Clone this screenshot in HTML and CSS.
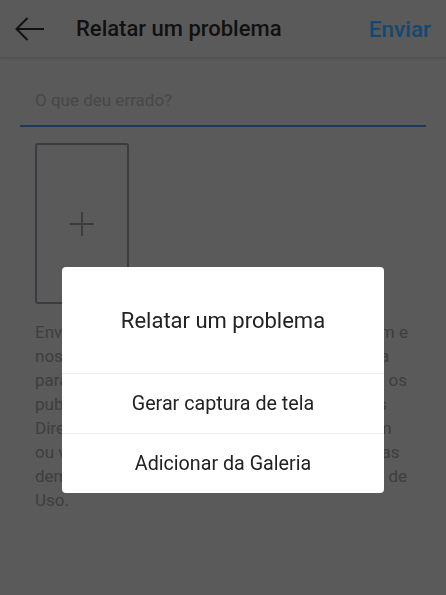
FILE: index.html
```html
<!DOCTYPE html>
<html lang="pt-BR">
<head>
    <meta charset="UTF-8">
    <meta name="viewport" content="width=device-width, initial-scale=1.0">
    <title>Relatar um problema</title>
    <link rel="stylesheet" href="styles.css">
</head>
<body>
    <header class="topbar">
        <svg class="back" width="30" height="24" viewBox="0 0 30 24">
            <path d="M29 12H1.5M12.5 1L1.5 12l11 11" fill="none" stroke="#111" stroke-width="2"/>
        </svg>
        <h1>Relatar um problema</h1>
        <span class="send">Enviar</span>
    </header>

    <main class="report">
        <div class="field">O que deu errado?</div>

        <div class="attach">
            <svg width="26" height="26" viewBox="0 0 26 26">
                <path d="M13 1v24M1 13h24" stroke="#3a3c40" stroke-width="2"/>
            </svg>
        </div>

        <p class="note">
            Envie seu relatório dos problemas ao Instagram e<br>
            nossa equipe vai analisar o que ocorreu na tela<br>
            para todos. Para denunciar um abuso real, use os<br>
            publicações ou comentários que não sigam as<br>
            Diretrizes da Comunidade ou que estiverem em<br>
            ou violam os direitos autorais de terceiros, ou as<br>
            demais normas que estão nos nossos Termos de<br>
            Uso.
        </p>
    </main>

    <div class="overlay">
        <div class="dialog">
            <div class="dialog-title">Relatar um problema</div>
            <div class="dialog-item">Gerar captura de tela</div>
            <div class="dialog-item">Adicionar da Galeria</div>
        </div>
    </div>
</body>
</html>
```

FILE: styles.css
```css
body {
    font-family: Roboto, "Liberation Sans", sans-serif;
    margin: 0;
    background-color: #5a5a5a;
    color: #3e3e3e;
}
.topbar {
    display: flex;
    align-items: center;
    height: 57px;
    padding: 0 15px;
    border-bottom: 1px solid #515151;
    box-shadow: 0 1px 2px rgba(0,0,0,0.08);
}
.back {
    display: block;
}
.topbar h1 {
    margin: 0 0 0 31px;
    font-size: 22px;
    font-weight: 500;
    color: #111;
}
.send {
    margin-left: auto;
    font-size: 22.5px;
    font-weight: 500;
    color: #17476f;
}
.report {
    padding: 0 20px;
}
.field {
    padding: 32px 15px 15px;
    font-size: 17px;
    line-height: 20px;
    color: #474747;
    border-bottom: 2px solid #1a3a58;
}
.attach {
    display: flex;
    align-items: center;
    justify-content: center;
    width: 90px;
    height: 157px;
    margin: 16px 0 0 15px;
    border: 2px solid #3a3c40;
    border-radius: 3px;
}
.note {
    margin: 16px 0 0 15px;
    font-size: 17px;
    line-height: 24px;
    white-space: nowrap;
    color: #3e3e3e;
}
.overlay {
    position: fixed;
    inset: 0;
    padding-top: 267px;
}
.dialog {
    width: 322px;
    margin: 0 auto;
    background: #fff;
    border-radius: 4px;
    overflow: hidden;
}
.dialog-title {
    height: 106px;
    display: flex;
    align-items: center;
    justify-content: center;
    font-size: 22px;
    color: #222;
}
.dialog-item {
    height: 59px;
    display: flex;
    align-items: center;
    justify-content: center;
    border-top: 1px solid #efefef;
    font-size: 19.7px;
    color: #222;
}
```
